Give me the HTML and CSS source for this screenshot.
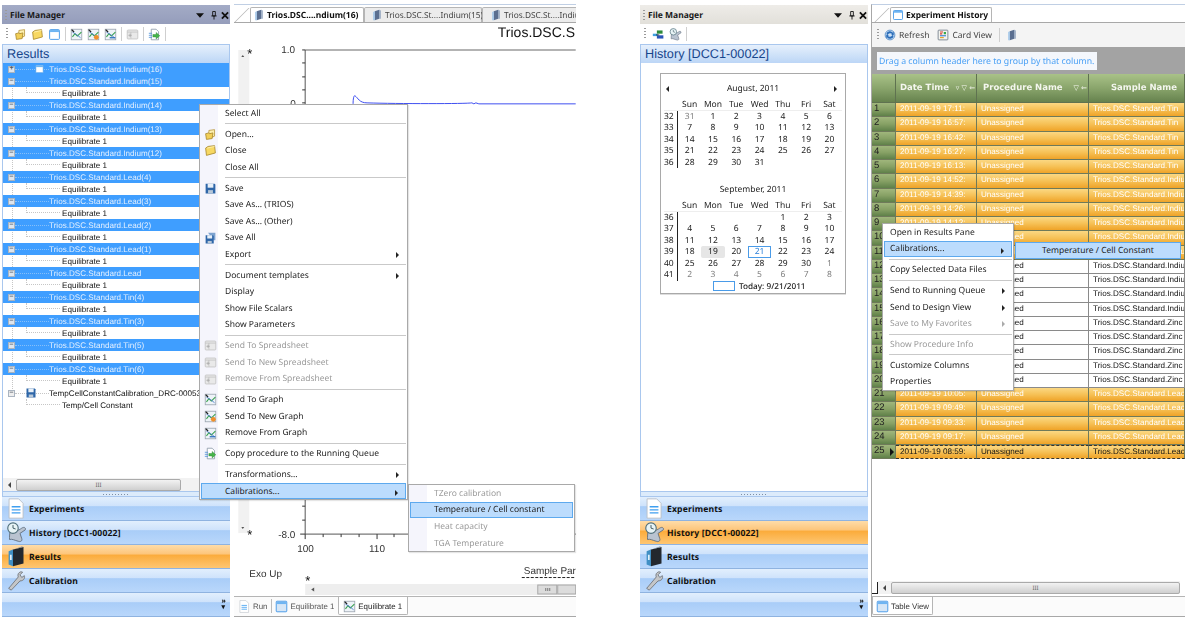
FILE: index.html
```html
<!DOCTYPE html>
<html lang="en">
<head>
  <meta charset="UTF-8">
  <title>TRIOS File Manager</title>
  <link rel="stylesheet" href="styles.css">
</head>
<body>

  <!-- shared icons -->
  <svg class="defs" width="0" height="0">
    <symbol id="i-drop" viewBox="0 0 9 9"><path d="M0 2h9L4.500 7z" fill="#111"/></symbol>
    <symbol id="i-pin" viewBox="0 0 9 9"><path d="M3 0h3v5H3zM1.500 5h6M4.500 5v4" fill="none" stroke="#111"/></symbol>
    <symbol id="i-close" viewBox="0 0 9 9"><path d="M1 1l7 7M8 1L1 8" stroke="#111" stroke-width="2"/></symbol>
    <symbol id="i-folder-open" viewBox="0 0 16 16"><path d="M6 3l7-1v8l-7 3z" fill="#fdf0b0" stroke="#b7953a"/><path d="M2 7l4-1 1 1 4-1-1 7-7 1z" fill="#f2cf58" stroke="#a8872c"/></symbol>
    <symbol id="i-folder" viewBox="0 0 16 16"><path d="M2 5l3-2 8-1 1 9-11 3z" fill="#f7d862" stroke="#a8872c"/><path d="M4 5l9-2" stroke="#fff3b8"/></symbol>
    <symbol id="i-window" viewBox="0 0 16 16"><rect x="2" y="2" width="12" height="12" rx="1" fill="#fff" stroke="#4a9be8" stroke-width="1.2"/><rect x="2.500" y="2.500" width="11" height="2.500" fill="#6db4f2"/></symbol>
    <symbol id="i-graph" viewBox="0 0 16 16"><rect x="1.500" y="1.500" width="13" height="13" fill="#eef3f8" stroke="#98a2ad"/><path d="M3 11l3-4 3 3 5-5" fill="none" stroke="#35a04a" stroke-width="1.300"/><path d="M3 5l5 3 5 4" fill="none" stroke="#3d72c8"/><path d="M2 2l3 3" stroke="#222" stroke-width="1.600"/></symbol>
    <symbol id="i-graph-new" viewBox="0 0 16 16"><use href="#i-graph"/><circle cx="11.500" cy="11.500" r="3" fill="#f0902a"/></symbol>
    <symbol id="i-graph-del" viewBox="0 0 16 16"><use href="#i-graph"/><path d="M7 12h7" stroke="#2c6fbd" stroke-width="1.600"/></symbol>
    <symbol id="i-sheet" viewBox="0 0 16 16"><rect x="1.500" y="2.500" width="13" height="11" rx="1" fill="#e9e9e9" stroke="#c2c2c2"/><path d="M1.500 5h13M6 5v8" stroke="#c2c2c2"/><path d="M3 9h4M5 7v4" stroke="#a8a8a8"/></symbol>
    <symbol id="i-floppy" viewBox="0 0 16 16"><path d="M2 2h11l1 1v11H2z" fill="#2e66a8"/><rect x="4.500" y="2" width="7" height="5" fill="#e8f0f8"/><rect x="5" y="10" width="6" height="4" fill="#b8c8d8"/></symbol>
    <symbol id="i-floppies" viewBox="0 0 16 16"><path d="M5 1h9v9h-2z" fill="#7da3cf"/><path d="M2 4h9l1 1v9H2z" fill="#2e66a8"/><rect x="4" y="4" width="6" height="4" fill="#e8f0f8"/><rect x="4.500" y="11" width="5" height="3" fill="#b8c8d8"/></symbol>
    <symbol id="i-copy" viewBox="0 0 16 16"><path d="M4 1.500h6l3 3v10H4z" fill="#fff" stroke="#8a97a6"/><path d="M1 6.500h4M1 9h4M1 11.500h4" stroke="#4a8fd8"/><path d="M6 8h4V5.500l4.500 4-4.500 4V11H6z" fill="#45b54a" stroke="#2c8432" stroke-width=".5"/></symbol>
    <symbol id="i-binder" viewBox="0 0 16 16"><path d="M5 3l6-2v12l-6 2z" fill="#5b6f90"/><path d="M5 3L3 4v11l2 0z" fill="#9cc3e8"/><path d="M11 1l2 1v11l-2 0z" fill="#8fa2bd"/></symbol>
    <symbol id="i-nav-doc" viewBox="0 0 24 24"><path d="M3.500 1h11l5 5v17h-16z" fill="#fff" stroke="#b8bec6"/><path d="M6.500 10h10M6.500 13.500h10M6.500 17h10" stroke="#3f9ff0" stroke-width="1.500"/></symbol>
    <symbol id="i-nav-history" viewBox="0 0 24 24"><path d="M5 9c5 2 9 1 13-2 3-2 5 0 4 2l-6 4 2 6c1 3-2 4-4 3-4-1-7-3-10-2 0-3 0-7 1-11z" fill="#b9c3d0" stroke="#5f6b7a"/><circle cx="8" cy="7" r="6" fill="#e8f4f6" stroke="#51707c" stroke-width="1.300"/><path d="M8 3.500V7l3 1" fill="none" stroke="#2f4a55"/></symbol>
    <symbol id="i-nav-results" viewBox="0 0 24 24"><path d="M8 4l12-3v19L8 23z" fill="#23282e"/><path d="M3 6l5-2v19l-5-2z" fill="#3f8fc4"/><rect x="4.500" y="10" width="2" height="6" fill="#dff0fa"/><path d="M8 4l12-3-2-.5L3 6z" fill="#7d8896"/></symbol>
    <symbol id="i-nav-wrench" viewBox="0 0 24 24"><path d="M3 21l11-13c-1-3 0-5 3-6l2 .5-3 3 2 3 3-2c1 3-1 6-5 6L6 23z" fill="#c4c6c8" stroke="#70757a"/></symbol>
    <symbol id="i-refresh" viewBox="0 0 16 16"><circle cx="8" cy="8" r="6.500" fill="#cfe3f6" stroke="#3e7cc0"/><path d="M3 7a5 5 0 0 1 9-2l1-2v5H9l2-1a3.500 3.500 0 0 0-6 1zM13 9a5 5 0 0 1-9 2l-1 2V8h4L5 9a3.500 3.500 0 0 0 6-1z" fill="#2a6cb8"/></symbol>
    <symbol id="i-card" viewBox="0 0 16 16"><rect x="1.500" y="1.500" width="13" height="13" rx="1" fill="#f3f3ee" stroke="#5f6b7a"/><path d="M4 4h4M4 6.500h3" stroke="#d83a2a" stroke-width="1.500"/><path d="M4 9h8" stroke="#3a7fd0" stroke-width="1.500"/><path d="M4 11.500h5" stroke="#e8a020" stroke-width="1.500"/><path d="M9 4h3v3H9z" fill="#3aa84a"/></symbol>
    <symbol id="i-gear-sheets" viewBox="0 0 16 16"><path d="M1 7h6v3H1z" fill="#3fa0e0"/><path d="M6 3h7v4H6z" fill="#2d8a3a"/><path d="M6 9h8v4H6z" fill="#2a55b8"/><path d="M5 8.500h4" stroke="#222"/></symbol>
    <symbol id="i-table" viewBox="0 0 16 16"><rect x="1.500" y="1.500" width="13" height="13" rx="1" fill="#d6e6f6" stroke="#4a9be8" stroke-width="1.200"/><rect x="2.500" y="2.500" width="11" height="2.500" fill="#6db4f2"/></symbol>
  </svg>

  <!-- Results screen -->
  <section class="screen screen-left">
    <aside class="side">
      <div class="title-bar inactive">
        <b class="grip"></b><span class="title-text">File Manager</span>
        <span class="title-btns">
          <svg><use href="#i-drop"/></svg><svg><use href="#i-pin"/></svg><svg><use href="#i-close"/></svg>
        </span>
      </div>
      <div class="toolbar">
        <b class="grip"></b>
        <svg class="tb-icon"><use href="#i-folder-open"/></svg>
        <svg class="tb-icon"><use href="#i-folder"/></svg>
        <svg class="tb-icon"><use href="#i-window"/></svg>
        <b class="tb-sep"></b>
        <svg class="tb-icon"><use href="#i-graph"/></svg>
        <svg class="tb-icon"><use href="#i-graph-new"/></svg>
        <svg class="tb-icon"><use href="#i-graph-del"/></svg>
        <b class="tb-sep"></b>
        <svg class="tb-icon"><use href="#i-sheet"/></svg>
        <b class="tb-sep"></b>
        <svg class="tb-icon"><use href="#i-copy"/></svg>
        <b class="tb-sep"></b>
      </div>
      <h2 class="pane-head">Results</h2>
      <div class="pane-body tree">
        <div class="node sel"><i class="exp">+</i><i class="dash"><svg class="node-win"><use href="#i-window"/></svg></i><span>Trios.DSC.Standard.Indium(16)</span></div>
        <div class="node sel"><i class="exp">–</i><i class="dash"></i><span>Trios.DSC.Standard.Indium(15)</span></div>
        <div class="node"><i class="elbow"></i><span>Equilibrate 1</span></div>
        <div class="node sel"><i class="exp">–</i><i class="dash"></i><span>Trios.DSC.Standard.Indium(14)</span></div>
        <div class="node"><i class="elbow"></i><span>Equilibrate 1</span></div>
        <div class="node sel"><i class="exp">–</i><i class="dash"></i><span>Trios.DSC.Standard.Indium(13)</span></div>
        <div class="node"><i class="elbow"></i><span>Equilibrate 1</span></div>
        <div class="node sel"><i class="exp">–</i><i class="dash"></i><span>Trios.DSC.Standard.Indium(12)</span></div>
        <div class="node"><i class="elbow"></i><span>Equilibrate 1</span></div>
        <div class="node sel"><i class="exp">–</i><i class="dash"></i><span>Trios.DSC.Standard.Lead(4)</span></div>
        <div class="node"><i class="elbow"></i><span>Equilibrate 1</span></div>
        <div class="node sel"><i class="exp">–</i><i class="dash"></i><span>Trios.DSC.Standard.Lead(3)</span></div>
        <div class="node"><i class="elbow"></i><span>Equilibrate 1</span></div>
        <div class="node sel"><i class="exp">–</i><i class="dash"></i><span>Trios.DSC.Standard.Lead(2)</span></div>
        <div class="node"><i class="elbow"></i><span>Equilibrate 1</span></div>
        <div class="node sel"><i class="exp">–</i><i class="dash"></i><span>Trios.DSC.Standard.Lead(1)</span></div>
        <div class="node"><i class="elbow"></i><span>Equilibrate 1</span></div>
        <div class="node sel"><i class="exp">–</i><i class="dash"></i><span>Trios.DSC.Standard.Lead</span></div>
        <div class="node"><i class="elbow"></i><span>Equilibrate 1</span></div>
        <div class="node sel"><i class="exp">–</i><i class="dash"></i><span>Trios.DSC.Standard.Tin(4)</span></div>
        <div class="node"><i class="elbow"></i><span>Equilibrate 1</span></div>
        <div class="node sel"><i class="exp">–</i><i class="dash"></i><span>Trios.DSC.Standard.Tin(3)</span></div>
        <div class="node"><i class="elbow"></i><span>Equilibrate 1</span></div>
        <div class="node sel"><i class="exp">–</i><i class="dash"></i><span>Trios.DSC.Standard.Tin(5)</span></div>
        <div class="node"><i class="elbow"></i><span>Equilibrate 1</span></div>
        <div class="node sel"><i class="exp">–</i><i class="dash"></i><span>Trios.DSC.Standard.Tin(6)</span></div>
        <div class="node"><i class="elbow"></i><span>Equilibrate 1</span></div>
        <div class="node"><i class="exp light">–</i><i class="dash"><svg class="node-save"><use href="#i-floppy"/></svg></i><span>TempCellConstantCalibration_DRC-00053_</span></div>
        <div class="node"><i class="elbow"></i><span>Temp/Cell Constant</span></div>
      </div>
      <div class="hscroll tree-scroll"><i class="arrow-l"></i><div class="thumb tree-thumb"><i>III</i></div></div>
      <div class="split-grip"><i></i></div>
      <nav class="nav">
        <div class="nav-item"><svg class="nav-icon"><use href="#i-nav-doc"/></svg>Experiments</div>
        <div class="nav-item"><svg class="nav-icon"><use href="#i-nav-history"/></svg>History [DCC1-00022]</div>
        <div class="nav-item active"><svg class="nav-icon"><use href="#i-nav-results"/></svg>Results</div>
        <div class="nav-item"><svg class="nav-icon"><use href="#i-nav-wrench"/></svg>Calibration</div>
        <div class="nav-item nav-end"><span class="nav-more">»<br>▾</span></div>
      </nav>
    </aside>

    <main class="doc">
      <div class="doc-tabs">
        <div class="doc-tab on tab-a"><svg class="tab-icon"><use href="#i-binder"/></svg>Trios.DSC....ndium(16)</div>
        <div class="doc-tab tab-b"><svg class="tab-icon"><use href="#i-binder"/></svg>Trios.DSC.St....Indium(15)</div>
        <div class="doc-tab tab-c"><svg class="tab-icon"><use href="#i-binder"/></svg>Trios.DSC.St....Indiu</div>
      </div>
      <svg class="chart" viewBox="234 23 342 574">
        <text class="chart-title" x="498" y="37">Trios.DSC.S</text>
        <rect x="238" y="50" width="11" height="484" fill="#f1f1f1"/>
        <path d="M241 57h3l-1.500-2zM241 528h3l-1.500 2z" fill="#555"/>
        <text class="chart-star" x="247" y="58">*</text>
        <text class="chart-star" x="247" y="540">*</text>
        <text class="chart-star" x="305" y="586">*</text>
        <path d="M305 50H576" stroke="#9a9a9a" stroke-width="1.500"/>
        <path d="M305 50V535H576" stroke="#555" fill="none"/>
        <path d="M302 50h3M302 63h3M302 77h3M302 90h3M302 103h3M302 507h3M302 521h3M300 535h5M323 535v3M341 535v3M359 535v3M305 535v5M377 535v5M394 535v3" stroke="#333" fill="none"/>
        <text class="chart-num" x="281" y="53">1.0</text>
        <text class="chart-num" x="290" y="107">0</text>
        <text class="chart-num" x="278" y="539">-8.0</text>
        <text class="chart-num" x="297" y="553">100</text>
        <text class="chart-num" x="369" y="553">110</text>
        <text class="chart-num" x="249" y="578">Exo Up</text>
        <text class="chart-num" x="524" y="575">Sample Par</text>
        <path d="M522 578.500h54" stroke="#222" stroke-dasharray="3 1.500"/>
        <path d="M353 104c0-6 1-9 2-8 3 2 4 7 12 7 30 1 100 1 105 0l2 1 2-1 3 1H576" fill="none" stroke="#3f4ff0"/>
        <rect x="305" y="585" width="271" height="11" fill="#eeeeee"/>
        <path d="M311 590.500l3-2v4z" fill="#555"/>
        <rect x="538" y="586" width="19" height="9" fill="#dcdcdc" stroke="#a8a8a8"/>
        <rect x="558" y="586" width="18" height="9" fill="#dcdcdc" stroke="#a8a8a8"/>
        <path d="M546 589v3M548 589v3M550 589v3" stroke="#777"/>
      </svg>
      <div class="doc-foot chart-foot">
        <div class="foot-tab plain"><svg class="foot-icon"><use href="#i-nav-doc"/></svg>Run</div>
        <div class="foot-tab plain"><svg class="foot-icon"><use href="#i-table"/></svg>Equilibrate 1</div>
        <div class="foot-tab on"><svg class="foot-icon"><use href="#i-graph"/></svg>Equilibrate 1</div>
      </div>
    </main>

    <!-- context menu -->
    <div class="menu menu-main">
      <div class="mi"><span>Select All</span></div>
      <hr>
      <div class="mi"><svg><use href="#i-folder-open"/></svg><span>Open...</span></div>
      <div class="mi"><svg><use href="#i-folder"/></svg><span>Close</span></div>
      <div class="mi"><span>Close All</span></div>
      <hr>
      <div class="mi"><svg><use href="#i-floppy"/></svg><span>Save</span></div>
      <div class="mi"><span>Save As... (TRIOS)</span></div>
      <div class="mi"><span>Save As... (Other)</span></div>
      <div class="mi"><svg><use href="#i-floppies"/></svg><span>Save All</span></div>
      <div class="mi more"><span>Export</span></div>
      <hr>
      <div class="mi more"><span>Document templates</span></div>
      <div class="mi"><span>Display</span></div>
      <div class="mi"><span>Show File Scalars</span></div>
      <div class="mi"><span>Show Parameters</span></div>
      <hr>
      <div class="mi off"><svg><use href="#i-sheet"/></svg><span>Send To Spreadsheet</span></div>
      <div class="mi off"><svg><use href="#i-sheet"/></svg><span>Send To New Spreadsheet</span></div>
      <div class="mi off"><svg><use href="#i-sheet"/></svg><span>Remove From Spreadsheet</span></div>
      <hr>
      <div class="mi"><svg><use href="#i-graph"/></svg><span>Send To Graph</span></div>
      <div class="mi"><svg><use href="#i-graph-new"/></svg><span>Send To New Graph</span></div>
      <div class="mi"><svg><use href="#i-graph-del"/></svg><span>Remove From Graph</span></div>
      <hr>
      <div class="mi"><svg><use href="#i-copy"/></svg><span>Copy procedure to the Running Queue</span></div>
      <hr>
      <div class="mi more"><span>Transformations...</span></div>
      <div class="mi more hot"><span>Calibrations...</span></div>
    </div>
    <div class="menu menu-sub">
      <div class="mi off"><span>TZero calibration</span></div>
      <div class="mi hot"><span>Temperature / Cell constant</span></div>
      <div class="mi off"><span>Heat capacity</span></div>
      <div class="mi off"><span>TGA Temperature</span></div>
    </div>
  </section>

  <!-- History screen -->
  <section class="screen screen-right">
    <aside class="side">
      <div class="title-bar">
        <b class="grip"></b><span class="title-text">File Manager</span>
        <span class="title-btns">
          <svg><use href="#i-drop"/></svg><svg><use href="#i-pin"/></svg><svg><use href="#i-close"/></svg>
        </span>
      </div>
      <div class="toolbar">
        <b class="grip"></b>
        <svg class="tb-icon"><use href="#i-gear-sheets"/></svg>
        <svg class="tb-icon"><use href="#i-nav-history"/></svg>
        <b class="tb-sep"></b>
      </div>
      <h2 class="pane-head">History [DCC1-00022]</h2>
      <div class="pane-body">
        <div class="cal">
          <div class="month">
            <div class="month-title"><i class="arrow-l"></i>August, 2011<i class="arrow-r"></i></div>
            <div class="cal-grid cal-names"><i></i><i>Sun</i><i>Mon</i><i>Tue</i><i>Wed</i><i>Thu</i><i>Fri</i><i>Sat</i></div>
            <div class="cal-grid"><b>32</b><i class="dim">31</i><i>1</i><i>2</i><i>3</i><i>4</i><i>5</i><i>6</i></div>
            <div class="cal-grid"><b>33</b><i>7</i><i>8</i><i>9</i><i>10</i><i>11</i><i>12</i><i>13</i></div>
            <div class="cal-grid"><b>34</b><i>14</i><i>15</i><i>16</i><i>17</i><i>18</i><i>19</i><i>20</i></div>
            <div class="cal-grid"><b>35</b><i>21</i><i>22</i><i>23</i><i>24</i><i>25</i><i>26</i><i>27</i></div>
            <div class="cal-grid"><b>36</b><i>28</i><i>29</i><i>30</i><i>31</i><i></i><i></i><i></i></div>
          </div>
          <div class="month">
            <div class="month-title">September, 2011</div>
            <div class="cal-grid cal-names"><i></i><i>Sun</i><i>Mon</i><i>Tue</i><i>Wed</i><i>Thu</i><i>Fri</i><i>Sat</i></div>
            <div class="cal-grid"><b>36</b><i></i><i></i><i></i><i></i><i>1</i><i>2</i><i>3</i></div>
            <div class="cal-grid"><b>37</b><i>4</i><i>5</i><i>6</i><i>7</i><i>8</i><i>9</i><i>10</i></div>
            <div class="cal-grid"><b>38</b><i>11</i><i>12</i><i>13</i><i>14</i><i>15</i><i>16</i><i>17</i></div>
            <div class="cal-grid"><b>39</b><i>18</i><i class="picked">19</i><i>20</i><i class="today">21</i><i>22</i><i>23</i><i>24</i></div>
            <div class="cal-grid"><b>40</b><i>25</i><i>26</i><i>27</i><i>28</i><i>29</i><i>30</i><i class="dim">1</i></div>
            <div class="cal-grid"><b>41</b><i class="dim">2</i><i class="dim">3</i><i class="dim">4</i><i class="dim">5</i><i class="dim">6</i><i class="dim">7</i><i class="dim">8</i></div>
          </div>
          <div class="cal-today"><i></i>Today: 9/21/2011</div>
        </div>
      </div>
      <div class="split-grip"><i></i></div>
      <nav class="nav">
        <div class="nav-item"><svg class="nav-icon"><use href="#i-nav-doc"/></svg>Experiments</div>
        <div class="nav-item active"><svg class="nav-icon"><use href="#i-nav-history"/></svg>History [DCC1-00022]</div>
        <div class="nav-item"><svg class="nav-icon"><use href="#i-nav-results"/></svg>Results</div>
        <div class="nav-item"><svg class="nav-icon"><use href="#i-nav-wrench"/></svg>Calibration</div>
        <div class="nav-item nav-end"><span class="nav-more">»<br>▾</span></div>
      </nav>
    </aside>

    <main class="doc history">
      <div class="doc-tabs">
        <div class="doc-tab on tab-h"><svg class="tab-icon"><use href="#i-window"/></svg>Experiment History</div>
      </div>
      <div class="hist-tools">
        <b class="grip"></b>
        <svg class="tool-icon"><use href="#i-refresh"/></svg><span class="tool-label">Refresh</span>
        <svg class="tool-icon"><use href="#i-card"/></svg><span class="tool-label">Card View</span>
        <b class="tb-sep"></b>
        <svg class="tool-icon"><use href="#i-binder"/></svg>
      </div>
      <div class="group-area"><div class="group-box">Drag a column header here to group by that column.</div></div>
      <div class="grid">
        <div class="row head">
          <div class="col-date">Date Time<i class="sort">▿ ▽ ⇐</i></div>
          <div class="col-proc">Procedure Name<i class="sort">▽ ⇐</i></div>
          <div class="center">Sample Name</div>
        </div>
        <div class="row"><div>1</div><div>2011-09-19 17:11:</div><div>Unassigned</div><div>Trios.DSC.Standard.Tin</div></div>
        <div class="row"><div>2</div><div>2011-09-19 16:57:</div><div>Unassigned</div><div>Trios.DSC.Standard.Tin</div></div>
        <div class="row"><div>3</div><div>2011-09-19 16:42:</div><div>Unassigned</div><div>Trios.DSC.Standard.Tin</div></div>
        <div class="row"><div>4</div><div>2011-09-19 16:27:</div><div>Unassigned</div><div>Trios.DSC.Standard.Tin</div></div>
        <div class="row"><div>5</div><div>2011-09-19 16:13:</div><div>Unassigned</div><div>Trios.DSC.Standard.Tin</div></div>
        <div class="row"><div>6</div><div>2011-09-19 14:52:</div><div>Unassigned</div><div>Trios.DSC.Standard.Indium</div></div>
        <div class="row"><div>7</div><div>2011-09-19 14:39:</div><div>Unassigned</div><div>Trios.DSC.Standard.Indium</div></div>
        <div class="row"><div>8</div><div>2011-09-19 14:26:</div><div>Unassigned</div><div>Trios.DSC.Standard.Indium</div></div>
        <div class="row"><div>9</div><div>2011-09-19 14:12:</div><div>Unassigned</div><div>Trios.DSC.Standard.Indium</div></div>
        <div class="row"><div>10</div><div>2011-09-19 13:58:</div><div>Unassigned</div><div>Trios.DSC.Standard.Indium</div></div>
        <div class="row"><div>11</div><div>2011-09-19 13:44:</div><div>Unassigned</div><div>Trios.DSC.Standard.Indium</div></div>
        <div class="row plain"><div>12</div><div></div><div>Unassigned</div><div>Trios.DSC.Standard.Indium</div></div>
        <div class="row plain"><div>13</div><div></div><div>Unassigned</div><div>Trios.DSC.Standard.Indium</div></div>
        <div class="row plain"><div>14</div><div></div><div>Unassigned</div><div>Trios.DSC.Standard.Indium</div></div>
        <div class="row plain"><div>15</div><div></div><div>Unassigned</div><div>Trios.DSC.Standard.Indium</div></div>
        <div class="row plain"><div>16</div><div></div><div>Unassigned</div><div>Trios.DSC.Standard.Zinc</div></div>
        <div class="row plain"><div>17</div><div></div><div>Unassigned</div><div>Trios.DSC.Standard.Zinc</div></div>
        <div class="row plain"><div>18</div><div></div><div>Unassigned</div><div>Trios.DSC.Standard.Zinc</div></div>
        <div class="row plain"><div>19</div><div></div><div>Unassigned</div><div>Trios.DSC.Standard.Zinc</div></div>
        <div class="row plain"><div>20</div><div></div><div>Unassigned</div><div>Trios.DSC.Standard.Zinc</div></div>
        <div class="row"><div>21</div><div>2011-09-19 10:05:</div><div>Unassigned</div><div>Trios.DSC.Standard.Lead</div></div>
        <div class="row"><div>22</div><div>2011-09-19 09:49:</div><div>Unassigned</div><div>Trios.DSC.Standard.Lead</div></div>
        <div class="row"><div>23</div><div>2011-09-19 09:33:</div><div>Unassigned</div><div>Trios.DSC.Standard.Lead</div></div>
        <div class="row"><div>24</div><div>2011-09-19 09:17:</div><div>Unassigned</div><div>Trios.DSC.Standard.Lead</div></div>
        <div class="row current"><div>25<i class="row-mark"></i></div><div>2011-09-19 08:59:</div><div>Unassigned</div><div>Trios.DSC.Standard.Lead</div></div>
      </div>
      <div class="grid-rest"></div>
      <div class="grid-scroll">
        <i class="corner"></i>
        <div class="hscroll"><i class="arrow-l"></i><div class="thumb"><i>III</i></div></div>
      </div>
      <div class="doc-foot">
        <div class="foot-tab on"><svg class="foot-icon"><use href="#i-table"/></svg>Table View</div>
      </div>
    </main>

    <div class="menu menu-grid">
      <div class="mi"><span>Open in Results Pane</span></div>
      <div class="mi more hot"><span>Calibrations...</span></div>
      <hr>
      <div class="mi"><span>Copy Selected Data Files</span></div>
      <hr>
      <div class="mi more"><span>Send to Running Queue</span></div>
      <div class="mi more"><span>Send to Design View</span></div>
      <div class="mi more off"><span>Save to My Favorites</span></div>
      <hr>
      <div class="mi off"><span>Show Procedure Info</span></div>
      <hr>
      <div class="mi"><span>Customize Columns</span></div>
      <div class="mi"><span>Properties</span></div>
    </div>
    <div class="menu-flyout">Temperature / Cell Constant</div>
  </section>

</body>
</html>
```

FILE: styles.css
```css
* {
  box-sizing: border-box;
}

body {
  margin: 0;
  width: 1185px;
  height: 624px;
  overflow: hidden;
  display: flex;
  justify-content: space-between;
  background: #fff;
  color: #111;
  font-family: "Noto Sans", sans-serif;
  font-size: 8.5px;
  text-rendering: geometricPrecision;
}

.defs {
  position: absolute;
}

i {
  font-style: normal;
}

.screen {
  position: relative;
  display: flex;
  height: 617px;
  padding-top: 4px;
  filter: blur(.3px);
}

.screen-left {
  width: 576px;
  padding-left: 2px;
}

.screen-right {
  width: 546px;
  padding-left: 1px;
}

/* side pane */
.side {
  width: 228px;
  flex: none;
  display: flex;
  flex-direction: column;
  padding-top: 1px;
}

.title-bar {
  height: 19px;
  display: flex;
  align-items: center;
  padding: 2px 1px 0 3px;
  background: linear-gradient(#eeece8, #e2e0da);
}

.title-bar.inactive {
  background: linear-gradient(#a3abc6, #959dbb);
}

.title-text {
  margin-left: 3px;
  font-weight: 700;
  font-size: 8.5px;
  color: #1a1a1a;
}

.title-btns {
  margin-left: auto;
  display: flex;
  gap: 3px;
}

.title-btns svg {
  width: 8px;
  height: 9px;
}

.title-btns svg:first-child {
  margin-right: 3px;
}

.grip {
  width: 2px;
  height: 12px;
  flex: none;
  background: repeating-linear-gradient(#9a9a9a 0 1px, transparent 1px 3px);
}

.toolbar {
  height: 20px;
  display: flex;
  align-items: center;
  gap: 4px;
  padding-left: 4px;
  background: #fff;
}

.toolbar .grip {
  margin-right: 2px;
}

.tb-icon {
  width: 13px;
  height: 13px;
  flex: none;
}

.tb-sep {
  width: 1px;
  height: 14px;
  flex: none;
  background: #cfcfcf;
}

.pane-head {
  height: 19px;
  margin: 0;
  padding-left: 4px;
  background: linear-gradient(#e6f0fc, #bcd6f6);
  border: 1px solid #a9c7ee;
  border-bottom: 0;
  color: #17468c;
  font: 400 12.7px/18px "Liberation Sans", sans-serif;
}

.pane-body {
  position: relative;
  flex: 1;
  min-height: 0;
  border-left: 1px solid #a9c7ee;
  border-right: 1px solid #a9c7ee;
  overflow: hidden;
}

/* results tree */
.tree::before {
  content: "";
  position: absolute;
  left: 9px;
  top: 12px;
  height: 320px;
  border-left: 1px dotted #c6c6c6;
}

.node {
  position: relative;
  height: 12px;
  display: flex;
  align-items: center;
  white-space: nowrap;
  color: #111;
  font-family: "Liberation Sans", sans-serif;
  font-size: 8.1px;
}

.node.sel {
  background: #3f9eff;
  color: #e4f0ff;
}

.exp {
  width: 7px;
  height: 7px;
  margin-left: 5px;
  flex: none;
  background: #dde5ee;
  border: 1px solid #aab4c0;
  color: #4c5560;
  font: 700 7px/4px "Liberation Sans", sans-serif;
  text-align: center;
}

.exp.light {
  background: #eee;
}

.dash {
  position: relative;
  width: 34px;
  flex: none;
  border-bottom: 1px dotted #86bff9;
}

.node:not(.sel) .dash {
  border-bottom-color: #c6c6c6;
}

.node-win {
  position: absolute;
  left: 19px;
  top: -5px;
  width: 11px;
  height: 10px;
}

.node-save {
  position: absolute;
  left: 10px;
  top: -6px;
  width: 12px;
  height: 12px;
}

.elbow {
  width: 34px;
  height: 6px;
  margin: -6px 2px 0 23px;
  flex: none;
  border-left: 1px dotted #c6c6c6;
  border-bottom: 1px dotted #c6c6c6;
}

/* scroll bars */
.hscroll {
  position: relative;
  flex: 1;
  height: 13px;
  display: flex;
  align-items: center;
  background: #f2f2f2;
}

.tree-scroll {
  flex: none;
  border-left: 1px solid #a9c7ee;
  border-right: 1px solid #a9c7ee;
}

.arrow-l {
  width: 0;
  height: 0;
  margin: 0 5px;
  flex: none;
  border: 3px solid transparent;
  border-left: 0;
  border-right: 3px solid #444;
}

.arrow-r {
  width: 0;
  height: 0;
  flex: none;
  border: 3px solid transparent;
  border-right: 0;
  border-left: 3px solid #222;
}

.thumb {
  flex: 1;
  height: 12px;
  margin-right: 5px;
  background: linear-gradient(#f2f2f2, #cfcfcf);
  border: 1px solid #aaa;
  border-radius: 2px;
  font-size: 6px;
  line-height: 10px;
  text-align: center;
  color: #666;
}

.tree-thumb {
  flex: none;
  width: 165px;
}

.split-grip {
  height: 6px;
  display: flex;
  justify-content: center;
  align-items: center;
  background: #dcebfb;
  border: 1px solid #a9c7ee;
}

.split-grip i {
  width: 26px;
  height: 1px;
  background: repeating-linear-gradient(90deg, #7f8fa5 0 1px, transparent 1px 3px);
}

/* bottom nav */
.nav-item {
  height: 24px;
  display: flex;
  align-items: center;
  padding: 1px 0 0 27px;
  position: relative;
  background: linear-gradient(#e2effd 0, #cfe3fb 38%, #a9cdf8 42%, #b9d7fb 100%);
  border-bottom: 1px solid #8fb3e0;
  font-weight: 700;
  font-size: 8.6px;
  letter-spacing: .15px;
  color: #101010;
}

.nav-item.active {
  background: linear-gradient(#ffdca8 0, #fdc67c 38%, #fbac3c 45%, #fec672 100%);
}

.nav-icon {
  position: absolute;
  left: 4px;
  top: 1px;
  width: 21px;
  height: 21px;
}

.nav-more {
  position: absolute;
  right: 4px;
  top: 6px;
  font-size: 7px;
  line-height: 6px;
}

/* document area */
.doc {
  flex: 1;
  min-width: 0;
  margin-left: 4px;
  display: flex;
  flex-direction: column;
  border-top: 1px solid #c0cfe4;
  overflow: hidden;
}

.doc-tabs {
  height: 18px;
  flex: none;
  display: flex;
  align-items: flex-end;
  border-bottom: 1px solid #a8a8a8;
}

.doc-tab {
  height: 15px;
  flex: none;
  display: flex;
  align-items: center;
  gap: 2px;
  white-space: nowrap;
  background: #ececec;
  border: 1px solid #b5b5b5;
  border-bottom: 0;
  border-radius: 2px 2px 0 0;
  color: #444;
  font-size: 8.3px;
}

.doc-tab.on {
  position: relative;
  background: #fff;
  color: #111;
  font-size: 8.5px;
  font-weight: 700;
}

.tab-icon {
  width: 12px;
  height: 12px;
  flex: none;
}

.tab-a {
  width: 114px;
  margin-left: 16px;
  padding-left: 2px;
}

.tab-a::before,
.tab-h::before {
  content: "";
  position: absolute;
  left: -10px;
  bottom: -1px;
  width: 18px;
  height: 15px;
  border-left: 1px solid #b5b5b5;
  background: #fff;
  transform: skewX(-45deg);
  z-index: -1;
}

.tab-b {
  width: 118px;
  padding-left: 6px;
}

.tab-c {
  width: 100px;
  padding-left: 7px;
}

.chart {
  flex: 1;
  min-height: 0;
  width: 100%;
  display: block;
  font-family: "Liberation Sans", sans-serif;
}

.chart-title {
  font-size: 14px;
  fill: #111;
}

.chart-num {
  font-size: 10px;
  fill: #333;
}

.chart-star {
  font-size: 13px;
  fill: #111;
}

.doc-foot {
  height: 21px;
  flex: none;
  display: flex;
  align-items: flex-start;
  border-top: 1px solid #b5b5b5;
  border-bottom: 1px solid #a8a8a8;
  background: #fbfbfb;
  font-family: "Liberation Sans", sans-serif;
  font-size: 7.9px;
}

.chart-foot {
  padding-left: 4px;
}

.foot-tab {
  height: 18px;
  display: flex;
  align-items: center;
  gap: 2px;
  padding: 1px 5px 0 4px;
  color: #555;
  white-space: nowrap;
}

.foot-tab.plain {
  border-right: 1px solid #bbb;
  height: 14px;
  margin-top: 2px;
  padding: 0 4px 0 0;
}

.foot-tab.on {
  background: #fff;
  border: 1px solid #b5b5b5;
  border-top: 0;
  border-radius: 0 0 2px 2px;
  color: #222;
}

.foot-tab.plain + .foot-tab.plain {
  padding-left: 3px;
  border-right: 0;
}

.foot-icon {
  width: 13px;
  height: 13px;
  flex: none;
}

/* context menus */
.menu {
  position: absolute;
  z-index: 5;
  padding: 0 1px;
  background: linear-gradient(90deg, #f5f5fc 18px, #fff 18px);
  border: 1px solid #a9a9a9;
  box-shadow: 1px 1px 1px rgba(0, 0, 0, .1);
  font-size: 8.5px;
  color: #222;
}

.menu hr {
  height: 1px;
  margin: 1.6px 0 1.6px 24px;
  border: 0;
  background: #c9c9c9;
}

.mi {
  position: relative;
  height: 16.6px;
  display: flex;
  align-items: center;
  padding-left: 24px;
  white-space: nowrap;
}

.mi svg {
  position: absolute;
  left: 3px;
  top: 2px;
  width: 13px;
  height: 13px;
}

.mi.off {
  color: #9a9a9a;
}

.mi.hot {
  background: #bcdcfd;
  border: 1px solid #5da9ee;
  padding-left: 23px;
}

.mi.more::after {
  content: "";
  position: absolute;
  right: 7px;
  top: 6px;
  border: 3px solid transparent;
  border-right: 0;
  border-left: 3px solid #222;
}

.mi.more.off::after {
  border-left-color: #aaa;
}

.menu-main {
  left: 199px;
  top: 104px;
  width: 209px;
}

.menu-sub {
  left: 408px;
  top: 484px;
  width: 167px;
}

.menu-grid {
  left: 243px;
  top: 223px;
  width: 132px;
  background: #fff;
}

.menu-grid .mi {
  padding-left: 6px;
}

.menu-grid .mi.hot {
  padding-left: 5px;
}

.menu-grid hr {
  margin-left: 5px;
}

.menu-flyout {
  position: absolute;
  z-index: 6;
  left: 376px;
  top: 242px;
  width: 166px;
  height: 17px;
  background: #bcdcfd;
  border: 1px solid #5da9ee;
  font-size: 8.5px;
  line-height: 15px;
  text-align: center;
  color: #222;
}

/* calendar */
.cal {
  width: 186px;
  height: 221px;
  margin: 10px 0 0 19px;
  padding: 9px 3px 0;
  background: #fff;
  border: 1px solid #a9a9a9;
  box-shadow: 0 1px 0 #ddd;
  color: #222;
}

.month {
  height: 101px;
}

.month-title {
  height: 12px;
  margin-bottom: 4px;
  display: flex;
  justify-content: center;
  align-items: center;
  position: relative;
  line-height: 12px;
}

.month-title .arrow-l {
  position: absolute;
  left: 2px;
  top: 3px;
  margin: 0;
  border-right-color: #222;
}

.month-title .arrow-r {
  position: absolute;
  right: 5px;
  top: 3px;
}

.cal-grid {
  display: grid;
  grid-template-columns: 14px repeat(7, 23.3px);
  height: 11.5px;
  line-height: 11.5px;
  text-align: center;
}

.cal-names {
  border-bottom: 1px solid #eee;
}

.cal-grid b {
  font-weight: 400;
  border-right: 1px solid #222;
  text-align: left;
  color: #222;
}

.dim {
  color: #808080;
}

.picked {
  background: #e6e6e6;
  border-radius: 2px;
}

.today {
  color: #2a7fd8;
  border: 1px solid #4a9be8;
  line-height: 9.5px;
}

.cal-today {
  display: flex;
  align-items: center;
  gap: 4px;
  margin-top: -5px;
  padding-left: 49px;
  height: 12px;
  font-size: 8.2px;
  font-weight: 500;
}

.cal-today i {
  width: 22px;
  height: 10px;
  border: 1px solid #4a9be8;
}

/* experiment history grid */
.history {
  margin-left: 3px;
  border-left: 1px solid #a8a8a8;
}

.tab-h {
  width: 102px;
  margin-left: 18px;
  padding-left: 1px;
  font-weight: 700;
}

.hist-tools {
  height: 24px;
  flex: none;
  display: flex;
  align-items: center;
  padding-left: 5px;
  background: #f4f4f4;
  color: #444;
  font-size: 8.5px;
}

.tool-icon {
  width: 12px;
  height: 12px;
  flex: none;
  margin: 0 3px 0 5px;
}

.tool-label {
  margin-right: 3px;
}

.hist-tools .tb-sep {
  margin: 0 1px 0 4px;
}

.group-area {
  height: 27px;
  flex: none;
  padding: 5px 0 0 5px;
  background: #a3a3a3;
}

.group-box {
  width: 220px;
  height: 18px;
  padding-left: 2px;
  background: #f4f7fc;
  color: #4aa0f5;
  font-size: 8.7px;
  line-height: 19px;
  white-space: nowrap;
  overflow: hidden;
}

.grid {
  flex: none;
}

.row {
  height: 14.25px;
  display: grid;
  grid-template-columns: 24px 81px 112px 1fr;
  color: #fff;
  font-family: "Liberation Sans", sans-serif;
  font-size: 8.1px;
  white-space: nowrap;
}

.row > div {
  padding-left: 4px;
  overflow: hidden;
  line-height: 12.5px;
  background: linear-gradient(#fbd883, #f6c156 50%, #efa328);
  border-right: 1px solid #6f7a5a;
  border-bottom: 1px solid #6f7a5a;
}

.row > div:first-child {
  position: relative;
  padding-left: 2px;
  background: linear-gradient(#a0b67c, #87a165 50%, #5f8049);
  color: #222;
  font-size: 9.5px;
}

.row.plain > div:not(:first-child) {
  background: #fff;
  color: #111;
  border-color: #8a8a8a;
}

.row.current > div:not(:first-child) {
  color: #111;
  border-top: 1px dashed #333;
  border-bottom: 1px dashed #333;
  line-height: 11px;
}

.row-mark {
  position: absolute;
  right: 1px;
  top: 3px;
  border: 4px solid transparent;
  border-right: 0;
  border-left: 4px solid #111;
}

.row.head {
  height: 29px;
  color: #f4f6ee;
  font-family: "DejaVu Sans", sans-serif;
  font-weight: 700;
  font-size: 8.5px;
}

.row.head::before {
  content: "";
  background: linear-gradient(#a9c288, #8aa56c 50%, #66824e);
  border-right: 1px solid #5f7250;
  border-bottom: 1px solid #5f7250;
}

.row.head > div {
  position: relative;
  padding-left: 4px;
  line-height: 28px;
  color: #f4f6ee;
  font-size: 8.5px;
  background: linear-gradient(#a9c288, #8aa56c 50%, #66824e);
  border-color: #5f7250;
}

.row.head > .col-proc {
  padding-left: 6px;
}

.sort {
  position: absolute;
  right: 1px;
  top: 0;
  font-size: 7px;
  font-weight: 400;
}

.row.head > .center {
  padding-left: 22px;
}

.grid-rest {
  flex: 1;
  min-height: 0;
}

.grid-scroll {
  height: 15px;
  flex: none;
  display: flex;
  align-items: flex-end;
  padding-right: 5px;
}

.corner {
  width: 6px;
  height: 12px;
  flex: none;
  border-right: 1px solid #222;
  border-bottom: 1px solid #222;
}

.grid-scroll .thumb {
  margin-right: 0;
}

.history .doc-foot {
  margin-top: 2px;
}

.history .foot-tab.on {
  width: 61px;
  padding-left: 3px;
  color: #333;
}
```
